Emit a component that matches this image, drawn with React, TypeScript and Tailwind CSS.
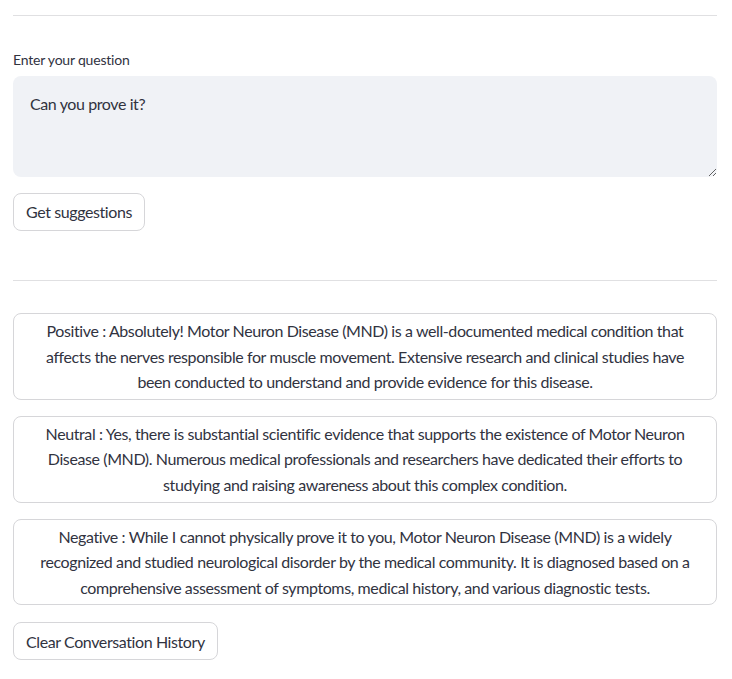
const font = { fontFamily: 'Lato, "Liberation Sans", sans-serif' }

const answers = [
  [
    'Positive : Absolutely! Motor Neuron Disease (MND) is a well-documented medical condition that',
    'affects the nerves responsible for muscle movement. Extensive research and clinical studies have',
    'been conducted to understand and provide evidence for this disease.',
  ],
  [
    'Neutral : Yes, there is substantial scientific evidence that supports the existence of Motor Neuron',
    'Disease (MND). Numerous medical professionals and researchers have dedicated their efforts to',
    'studying and raising awareness about this complex condition.',
  ],
  [
    'Negative : While I cannot physically prove it to you, Motor Neuron Disease (MND) is a widely',
    'recognized and studied neurological disorder by the medical community. It is diagnosed based on a',
    'comprehensive assessment of symptoms, medical history, and various diagnostic tests.',
  ],
]

function Button({ label }: { label: string }) {
  return (
    <button
      className="min-h-[38px] px-3 py-1 rounded-lg border border-[#d6d6d9] bg-white text-[16px] leading-[1.6] tracking-[-0.4px] text-[#31333f]"
      style={font}
    >
      {label}
    </button>
  )
}

export default function App() {
  return (
    <div className="min-h-[679px] bg-white text-[#31333f]" style={font}>
      <div className="w-[704px] ml-[13px] flex flex-col">
        <hr className="mt-[15px] border-t border-[#e0e0e2]" />

        <label className="mt-[33px] h-[22px] flex items-center text-[14px] leading-[22px] tracking-[-0.2px]">
          Enter your question
        </label>
        <textarea
          className="mt-[5px] h-[101px] w-full rounded-lg bg-[#f0f2f6] pl-[17px] pr-4 pt-[15px] pb-4 text-[16px] leading-[1.6] tracking-[-0.4px] text-[#31333f] outline-none resize-y"
          style={font}
          defaultValue="Can you prove it?"
        />

        <div className="mt-4">
          <Button label="Get suggestions" />
        </div>

        <hr className="mt-[49px] border-t border-[#e0e0e2]" />

        <div className="mt-[32px] flex flex-col gap-4">
          {answers.map((lines, i) => (
            <div
              key={i}
              className="rounded-lg border border-[#d6d6d9] bg-white px-3 py-1 text-center text-[16px] leading-[1.6] tracking-[-0.4px]"
            >
              {lines.map(l => (
                <span key={l} className="block whitespace-nowrap">{l}</span>
              ))}
            </div>
          ))}
        </div>

        <div className="mt-[17px]">
          <Button label="Clear Conversation History" />
        </div>
      </div>
    </div>
  )
}
